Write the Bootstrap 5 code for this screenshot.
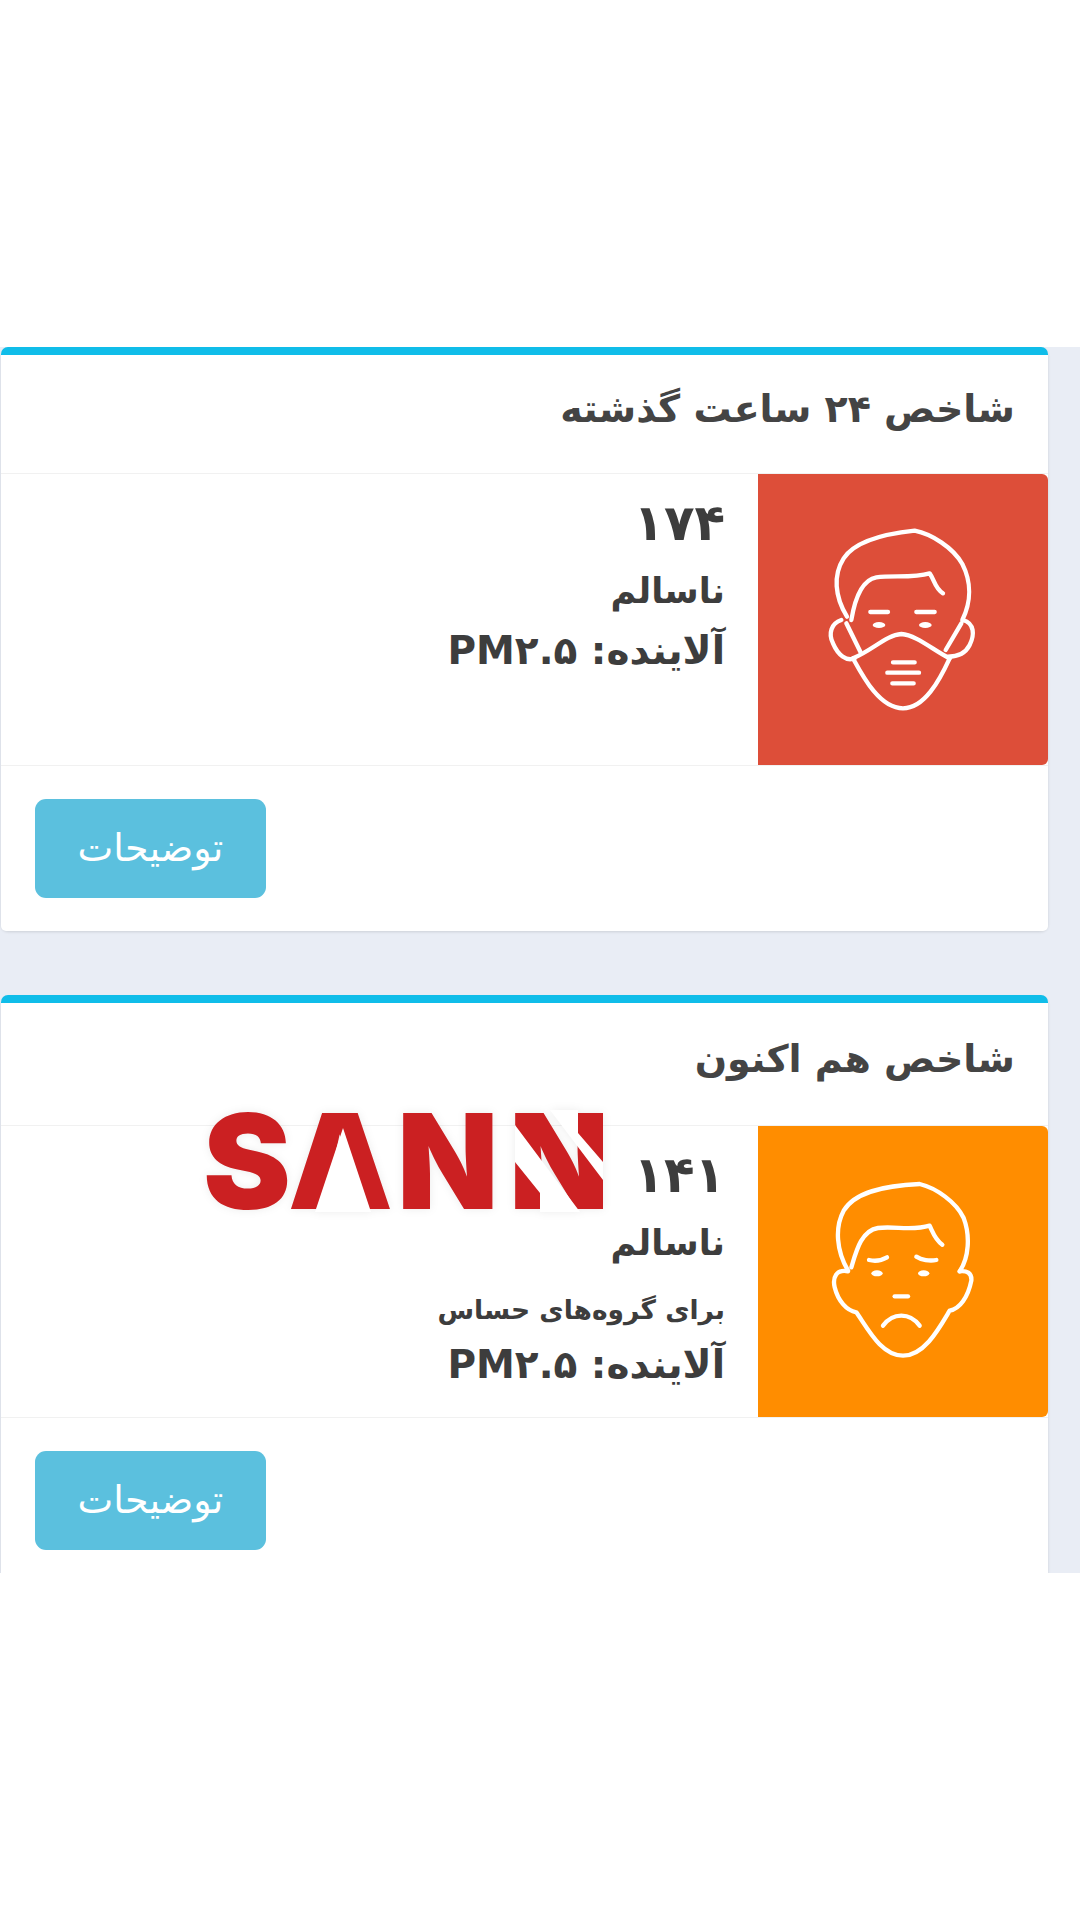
<!DOCTYPE html>
<html lang="fa" dir="rtl">
<head>
    <meta charset="UTF-8">
    <meta name="viewport" content="width=device-width, initial-scale=1.0">
    <title>شاخص کیفیت هوا</title>
    <link href="https://cdn.jsdelivr.net/npm/bootstrap@5.3.2/dist/css/bootstrap.min.css" rel="stylesheet">
    <style>
        body {
            background: #fff;
            font-family: "DejaVu Sans", sans-serif;
            color: #3d3d3d;
            height: 1920px;
            overflow: hidden;
            position: relative;
        }

        .page-shell {
            margin-top: 347px;
            height: 1226px;
            overflow: hidden;
            background: #e9edf5;
        }

        /* dir is rtl, so the 32px strip sits on the right */
        .aqi-stack {
            margin-right: 32px;
            margin-left: 1px;
        }

        .aqi-card {
            height: 583px;
            margin-bottom: 65px;
            border: 0;
            border-top: 8px solid #10bde9;
            border-radius: 7px;
            box-shadow: 0 2px 3px rgba(0, 0, 0, 0.12);
        }

        .aqi-card .card-header {
            flex: none;
            height: 119px;
            padding: 0 33px 10px;
            background: #fff;
            border-bottom: 1px solid #f1f1f1;
            font-size: 38px;
            font-weight: 700;
            color: #444;
        }

        .aqi-card .header-tall { height: 123px; }

        .aqi-card .card-body {
            height: 292px;
            flex: none;
            padding: 0;
            border-bottom: 1px solid #f1f1f1;
        }

        .level-panel {
            width: 290px;
            height: 291px;
            border-radius: 0 6px 6px 0;
        }

        .level-panel svg {
            width: 290px;
            height: 291px;
            display: block;
            fill: none;
            stroke: #fff;
            stroke-width: 13;
            stroke-linecap: round;
            stroke-linejoin: round;
        }

        .level-panel svg .eye {
            fill: #fff;
            stroke: none;
        }

        .panel-red { background: #dd4e39; }
        .panel-orange { background: #ff8d00; }

        .level-text {
            padding: 17px 33px 0 0;
            font-weight: 700;
        }

        .level-value { font-size: 50px; line-height: 64px; }
        .level-name { font-size: 35px; line-height: 72px; }
        .level-note { font-size: 26.5px; line-height: 62px; }
        .level-source { font-size: 39px; line-height: 48px; }

        .aqi-card .card-footer {
            flex: none;
            padding: 33px 34px;
            background: #fff;
            border: 0;
        }

        .btn-more {
            width: 231px;
            height: 99px;
            padding: 0;
            border: 0;
            border-radius: 11px;
            background: #5bc0de;
            color: #fff;
            font-size: 38px;
        }

        .logo-overlay {
            position: absolute;
            left: 190px;
            top: 1060px;
            width: 450px;
            height: 190px;
            filter: drop-shadow(0 0 4px rgba(0, 0, 0, 0.08));
        }

        .logo-overlay text {
            direction: ltr;
            font-family: Inter, "Liberation Sans", sans-serif;
            font-size: 132px;
            font-weight: 900;
            fill: #cb2022;
        }
    </style>
</head>
<body>

    <div class="page-shell">
        <div class="aqi-stack">

            <div class="card aqi-card">
                <div class="card-header d-flex align-items-center">شاخص ۲۴ ساعت گذشته</div>
                <div class="card-body d-flex">
                    <div class="level-panel panel-red">
                        <svg viewBox="55 42 870 873">
                            <path d="M322 470C285 410 280 345 312 295C345 245 430 222 525 212C575 222 640 262 668 312C695 365 695 425 668 480"/>
                            <path d="M335 480C345 420 365 360 410 352C460 345 520 355 570 340C585 360 585 385 610 400"/>
                            <path d="M392 456H445M530 456H585"/>
                            <ellipse class="eye" cx="418" cy="495" rx="19" ry="9"/>
                            <ellipse class="eye" cx="557" cy="495" rx="19" ry="9"/>
                            <path d="M305 480C275 490 265 520 280 550C295 585 320 605 345 595M320 490L362 575"/>
                            <path d="M670 480C705 490 705 525 690 555C675 585 650 590 625 590M665 490L618 570"/>
                            <path d="M340 595C400 570 440 525 485 522C530 525 580 570 630 595"/>
                            <path d="M340 595C370 650 420 745 490 745C555 745 600 660 630 595"/>
                            <path d="M460 607H525M443 638H538M458 670H522"/>
                        </svg>
                    </div>
                    <div class="level-text">
                        <div class="level-value">۱۷۴</div>
                        <div class="level-name">ناسالم</div>
                        <div class="level-source">آلاینده: PM۲.۵</div>
                    </div>
                </div>
                <div class="card-footer d-flex justify-content-end">
                    <button type="button" class="btn btn-more">توضیحات</button>
                </div>
            </div>

            <div class="card aqi-card">
                <div class="card-header header-tall d-flex align-items-center">شاخص هم اکنون</div>
                <div class="card-body d-flex">
                    <div class="level-panel panel-orange">
                        <svg viewBox="55 47 870 871">
                            <path d="M325 480C290 420 285 350 312 300C345 245 430 225 540 220C590 232 650 275 672 322C692 375 688 440 660 482"/>
                            <path d="M335 470C350 420 365 360 415 352C465 345 515 362 570 345C580 365 585 385 608 402"/>
                            <path d="M325 482C290 475 278 500 285 530C295 570 320 600 350 605C385 655 425 735 490 735C555 735 600 650 630 600C660 595 685 560 695 510C697 485 680 480 660 482"/>
                            <path d="M388 448C405 452 425 450 442 440M530 438C545 448 570 452 590 448"/>
                            <ellipse class="eye" cx="412" cy="488" rx="17" ry="9"/>
                            <ellipse class="eye" cx="552" cy="488" rx="17" ry="9"/>
                            <path d="M465 557H505"/>
                            <path d="M430 645C460 605 510 605 540 645"/>
                        </svg>
                    </div>
                    <div class="level-text">
                        <div class="level-value">۱۴۱</div>
                        <div class="level-name">ناسالم</div>
                        <div class="level-note">برای گروه‌های حساس</div>
                        <div class="level-source">آلاینده: PM۲.۵</div>
                    </div>
                </div>
                <div class="card-footer d-flex justify-content-end">
                    <button type="button" class="btn btn-more">توضیحات</button>
                </div>
            </div>

        </div>
    </div>

    <!-- watermark sits over the second card -->
    <svg class="logo-overlay" viewBox="190 1060 450 190">
        <defs>
            <clipPath id="logoClip"><rect x="190" y="1060" width="413" height="190"/></clipPath>
        </defs>
        <text x="203" y="1209">S</text>
        <text x="288" y="1209">A</text>
        <text x="397" y="1209">N</text>
        <text x="509" y="1209" clip-path="url(#logoClip)">N</text>
        <polygon points="343,1128 315,1212 371,1212" fill="#fff"/>
        <polygon points="515,1125 580,1212 540,1212 540,1193 515,1162" fill="#fff"/>
        <polygon points="550,1110 578,1110 578,1133 603,1162 603,1180" fill="#fff"/>
    </svg>

    <script src="https://cdn.jsdelivr.net/npm/bootstrap@5.3.2/dist/js/bootstrap.bundle.min.js"></script>
</body>
</html>
